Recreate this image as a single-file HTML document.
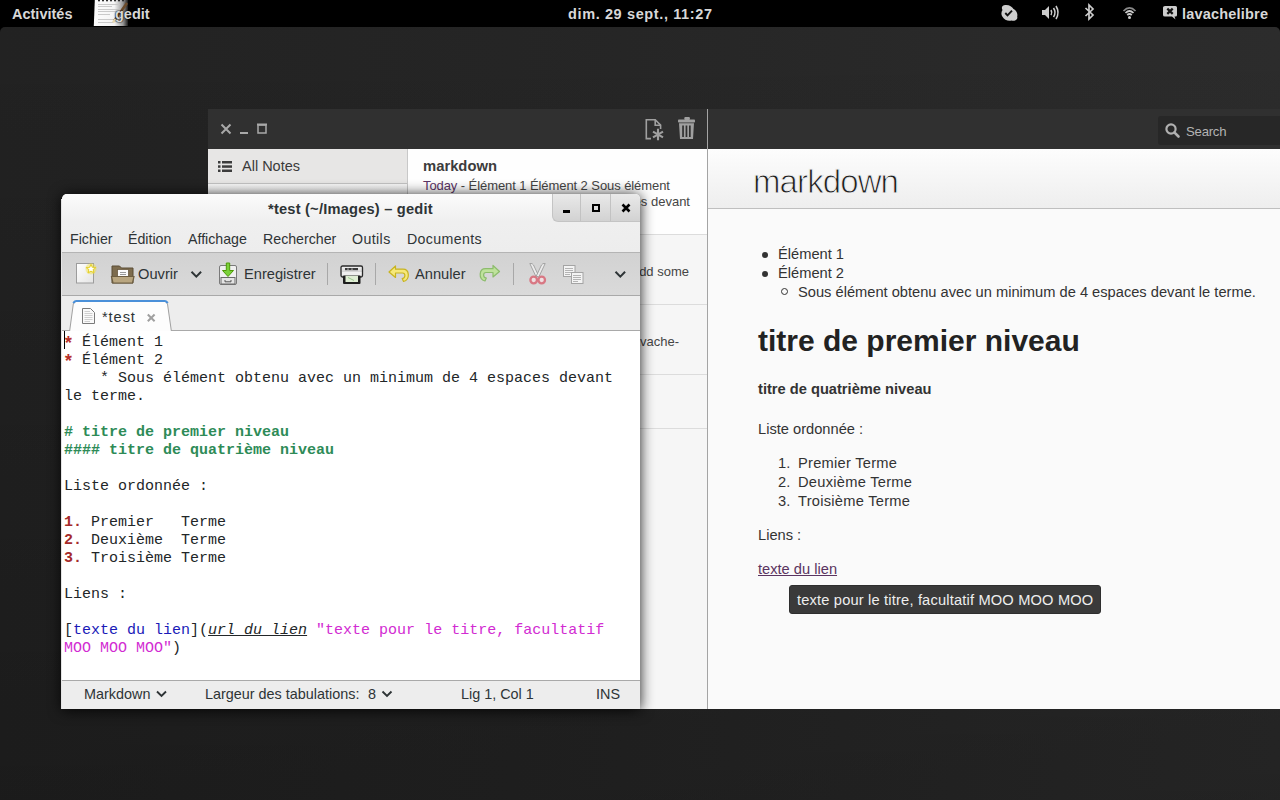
<!DOCTYPE html>
<html><head><meta charset="utf-8">
<style>
*{margin:0;padding:0;box-sizing:border-box}
html,body{width:1280px;height:800px;overflow:hidden}
body{position:relative;font-family:"Liberation Sans",sans-serif;background:#000}
.a{position:absolute}
#desk{left:0;top:27px;width:1280px;height:773px;border-radius:5px 5px 0 0;background:linear-gradient(180deg,rgba(0,0,0,0),rgba(0,0,0,.2)),linear-gradient(90deg,#222222,#252525 40%,#2c2c2c)}
#panel{left:0;top:0;width:1280px;height:27px;background:#000;color:#d8d8d8;font-weight:bold;font-size:14.5px}
#panel .t{position:absolute;top:5px;white-space:nowrap}
/* bijiben */
#bj{left:208px;top:109px;width:1072px;height:600px;background:#fafafa}
#bjhdr{left:0;top:0;width:1072px;height:40px;background:#303030}
#bjsep{left:499px;top:0;width:1px;height:600px;background:#a4a4a4}
#side{left:0;top:40px;width:200px;height:560px;background:#eae9e8;border-right:1px solid #c8c8c8}
#list{left:200px;top:40px;width:299px;height:560px;background:#f6f6f6}
#note{left:500px;top:40px;width:572px;height:560px;background:#fafafa}
/* gedit */
#ge{left:62px;top:194px;width:578px;height:515px;background:#ededed;border-radius:5px 5px 0 0;box-shadow:0 1px 14px rgba(0,0,0,.9)}
.mono{font-family:"Liberation Mono",monospace;font-size:15px;line-height:18px;white-space:pre;color:#222628}
.mn{top:37px;font-size:14.2px;color:#2e3436;line-height:17px;white-space:nowrap}
.tb{top:72px;font-size:14.67px;color:#2e3436;line-height:17px;white-space:nowrap}
.sb{top:492px;font-size:14.4px;color:#2e3436;line-height:17px;white-space:nowrap}
.ui{white-space:nowrap}
.r{color:#a52a2a;font-weight:bold}
.st{display:inline-block;width:9px;transform:translateY(2px) scale(1.2);color:#b8302a}
.g{color:#2e8b57;font-weight:bold}
.bl{color:#1a1ab8}
.u{font-style:italic;text-decoration:underline}
.m{color:#d22bd2}
</style></head><body>
<div id="desk" class="a"></div>
<div id="panel" class="a">
  <div class="t" style="left:12px;top:6px">Activités</div>
  <svg class="a" style="left:90px;top:0" width="42" height="27">
    <defs><linearGradient id="pg" x1="0" x2="1" y1="0" y2="0"><stop offset="0" stop-color="#fdfdfd"/><stop offset="0.6" stop-color="#f4f4f4"/><stop offset="0.85" stop-color="#9a9a9a"/><stop offset="1" stop-color="#1a1a1a"/></linearGradient></defs>
    <path d="M4.8 0 H38 V26 H3.8 Z" fill="url(#pg)"/>
    <g fill="#2a2a2a"><rect x="8" y="0" width="2" height="1.3"/><rect x="12" y="0" width="2" height="1.3"/><rect x="16" y="0" width="2" height="1.3"/><rect x="20" y="0" width="2" height="1.3"/><rect x="24" y="0" width="2" height="1.3"/><rect x="28" y="0" width="2" height="1.3"/><rect x="32" y="0" width="2" height="1.3"/></g>
    <g stroke="#c4c4c4" stroke-width="0.9"><path d="M8 4.5 H30 M8 6.5 H22 M8 9.5 H31 M8 11.5 H26 M8 14.5 H20 M8 19.5 H25 M8 22.5 H23"/></g>
    <path d="M37 3 L24 21" stroke="#6a4a2a" stroke-width="2.6"/>
    <path d="M25.5 19 L23 22.5" stroke="#e8d8b0" stroke-width="2.4"/>
  </svg>
  <div class="t" style="left:115px;top:6px;text-shadow:0 0 2px #000,0 0 1px #000">gedit</div>
  <div class="t" style="left:568px;top:6px;letter-spacing:0.62px">dim. 29 sept., 11:27</div>
  <svg class="a" style="left:990px;top:0" width="200" height="27" fill="#cdcdcd">
    <path d="M15 5 C19 4.5 22 6.5 23.5 9 C26 10 28 13.5 27.2 16.5 C28 19.5 25 21.5 21.5 20.5 C18.5 21.5 14 20 12.3 16.5 C11 14.5 11.2 12 12.5 10 C11 7 12.5 5.2 15 5 Z"/>
    <path d="M15.3 13 L17.5 15.3 L22 10.6" fill="none" stroke="#111" stroke-width="1.9"/>
    <path d="M52 10 H55 L59 6 V19 L55 15 H52 Z"/>
    <path d="M61 10 Q62.5 12.5 61 15" fill="none" stroke="#cdcdcd" stroke-width="1.6"/>
    <path d="M63.5 8 Q66.5 12.5 63.5 17" fill="none" stroke="#cdcdcd" stroke-width="1.6"/>
    <path d="M66 6 Q70 12.5 66 19" fill="none" stroke="#cdcdcd" stroke-width="1.6"/>
    <path d="M95.5 8 L103 15 L99 19 V5 L103 9 L95.5 16" fill="none" stroke="#cdcdcd" stroke-width="1.7"/>
    <path d="M133.5 11 Q139.5 5 145.5 11" fill="none" stroke="#8a8a8a" stroke-width="1.7"/>
    <path d="M135.5 13 Q139.5 9 143.5 13" fill="none" stroke="#cdcdcd" stroke-width="1.7"/>
    <path d="M137.2 15 Q139.5 13 141.8 15" fill="none" stroke="#cdcdcd" stroke-width="1.7"/>
    <circle cx="139.5" cy="17.6" r="1.5"/>
    <path d="M175 6 H185.5 Q187 6 187 7.5 V15 Q187 16.5 185.5 16.5 H184.5 L185.5 19.5 L182 16.5 H175 Q173 16.5 173 15 V7.5 Q173 6 175 6 Z"/>
    <path d="M177.3 8.6 L182.7 13.9 M182.7 8.6 L177.3 13.9" stroke="#111" stroke-width="2.2"/>
  </svg>
  <div class="t" style="left:1182px;top:6px;letter-spacing:0.2px">lavachelibre</div>
</div>

<div id="bj" class="a">
  <div id="bjhdr" class="a">
    <svg class="a" style="left:0;top:0" width="1072" height="40">
      <g stroke="#a8a8a8" stroke-width="2" fill="none">
        <path d="M13.5 15.5 L22.5 24.5 M22.5 15.5 L13.5 24.5"/>
        <path d="M32 24 H40"/>
        <rect x="50" y="16" width="8" height="8" stroke-width="1.5"/>
        <path d="M49 15.5 H59"/>
      </g>
      <g stroke="#a0a0a0" stroke-width="1.6" fill="none">
        <path d="M443 29.6 H438.3 V10.8 H447.2 L452.6 16.2 V20"/>
        <path d="M447.2 10.8 V16.2 H452.6" />
      </g>
      <path d="M450 19.8 V31.2 M445 22.6 L455 28.4 M445 28.4 L455 22.6" stroke="#a0a0a0" stroke-width="2.1" fill="none"/>
      <g fill="#a0a0a0">
        <rect x="476.3" y="8" width="5.6" height="3" rx="1"/>
        <rect x="470" y="10.5" width="17" height="3" rx="0.8"/>
        <path d="M471 14.3 H486 L485 30 H472 Z"/>
      </g>
      <g fill="#303030">
        <rect x="474.2" y="16.5" width="1.7" height="11.5"/>
        <rect x="477.6" y="16.5" width="1.7" height="11.5"/>
        <rect x="481" y="16.5" width="1.7" height="11.5"/>
      </g>
    </svg>
    <div class="a" style="left:950px;top:7px;width:140px;height:29px;background:#272727;border-radius:3px"></div>
    <svg class="a" style="left:956px;top:13px" width="18" height="18"><circle cx="7" cy="7" r="4.6" stroke="#b0b0b0" stroke-width="2.2" fill="none"/><path d="M10.3 10.3 L14.5 14.5" stroke="#b0b0b0" stroke-width="2.6" stroke-linecap="round"/></svg>
    <div class="a" style="left:978px;top:15px;font-size:13.2px;color:#b3b3b3;line-height:16px;letter-spacing:-0.25px">Search</div>
  </div>
  <div id="side" class="a">
    <div class="a" style="left:0;top:0;width:199px;height:35px;background:#e7e6e5;border-bottom:1px solid #c2c2c2"></div>
    <div class="a" style="left:0;top:35px;width:199px;height:30px;background:linear-gradient(#f8f8f8,#e6e6e6)"></div>
    <svg class="a" style="left:10px;top:11px" width="16" height="14"><g fill="#3c3c3c"><rect x="0" y="1" width="2.5" height="2.5"/><rect x="4" y="1" width="10" height="2.5"/><rect x="0" y="5.3" width="2.5" height="2.5"/><rect x="4" y="5.3" width="10" height="2.5"/><rect x="0" y="9.5" width="2.5" height="2.5"/><rect x="4" y="9.5" width="10" height="2.5"/></g></svg>
    <div class="a" style="left:34px;top:9px;font-size:14.5px;color:#3a3a3a;line-height:17px">All Notes</div>
  </div>
  <div id="list" class="a">
    <div class="a" style="left:0;top:0;width:299px;height:86px;background:#fefefe;border-bottom:1px solid #dcdcdc"></div>
    <div class="a" style="left:0;top:155px;width:299px;height:1px;background:#dcdcdc"></div>
    <div class="a" style="left:0;top:225px;width:299px;height:1px;background:#dcdcdc"></div>
    <div class="a" style="left:0;top:279px;width:299px;height:1px;background:#dcdcdc"></div>
    <div class="a" style="left:15px;top:9px;font-size:14.8px;font-weight:bold;color:#3c3c3c;line-height:17px">markdown</div>
    <div class="a" style="left:15px;top:29px;font-size:13px;color:#454545;line-height:16px;white-space:nowrap;letter-spacing:-0.08px"><span style="color:#5c3566">Today</span> - Élément 1 Élément 2 Sous élément</div>
    <div class="a" style="right:17px;top:45px;font-size:13px;color:#454545;line-height:16px;white-space:nowrap;text-align:right">obtenu avec un minimum de 4 espaces devant</div>
    <div class="a" style="right:18px;top:115px;font-size:13px;color:#454545;line-height:16px;white-space:nowrap;text-align:right">Click here to add some</div>
    <div class="a" style="right:28px;top:185px;font-size:13px;color:#454545;line-height:16px;white-space:nowrap;text-align:right">lavachelibre lavache-</div>
  </div>
  <div id="note" class="a">
    <div class="a" style="left:0;top:0;width:572px;height:60px;background:linear-gradient(#fdfdfd,#eeeeee);border-bottom:1px solid #bfbfbf"></div>
    <div class="a" style="left:45px;top:13px;font-size:33px;color:#1e1e1e;-webkit-text-stroke:0.9px #f3f3f3;paint-order:normal;line-height:40px;font-weight:normal;letter-spacing:-0.9px">markdown</div>
    <div id="nc" class="a" style="left:0;top:0;color:#333;font-size:14.67px">
      <div class="a" style="left:54px;top:103px;width:6px;height:6px;border-radius:50%;background:#333"></div>
      <div class="a" style="left:70px;top:97px;line-height:17px;white-space:nowrap">Élément 1</div>
      <div class="a" style="left:54px;top:122px;width:6px;height:6px;border-radius:50%;background:#333"></div>
      <div class="a" style="left:70px;top:116px;line-height:17px;white-space:nowrap">Élément 2</div>
      <div class="a" style="left:73px;top:139px;width:7px;height:7px;border-radius:50%;border:1px solid #333"></div>
      <div class="a" style="left:90px;top:135px;line-height:17px;white-space:nowrap">Sous élément obtenu avec un minimum de 4 espaces devant le terme.</div>
      <div class="a" style="left:50px;top:175px;line-height:34px;white-space:nowrap;font-size:30px;font-weight:bold;color:#222">titre de premier niveau</div>
      <div class="a" style="left:50px;top:232px;line-height:17px;white-space:nowrap;font-weight:bold">titre de quatrième niveau</div>
      <div class="a" style="left:50px;top:272px;line-height:17px;white-space:nowrap">Liste ordonnée :</div>
      <div class="a" style="left:70px;top:306px;line-height:17px;white-space:nowrap">1.</div>
      <div class="a" style="left:90px;top:306px;line-height:17px;white-space:nowrap;letter-spacing:0.26px">Premier Terme</div>
      <div class="a" style="left:70px;top:325px;line-height:17px;white-space:nowrap">2.</div>
      <div class="a" style="left:90px;top:325px;line-height:17px;white-space:nowrap;letter-spacing:0.26px">Deuxième Terme</div>
      <div class="a" style="left:70px;top:344px;line-height:17px;white-space:nowrap">3.</div>
      <div class="a" style="left:90px;top:344px;line-height:17px;white-space:nowrap;letter-spacing:0.26px">Troisième Terme</div>
      <div class="a" style="left:50px;top:378px;line-height:17px;white-space:nowrap">Liens :</div>
      <div class="a" style="left:50px;top:412px;line-height:17px;white-space:nowrap;color:#5a3460;text-decoration:underline">texte du lien</div>
    </div>
  </div>
  <div id="bjsep" class="a"></div>
</div>
<div class="a" style="left:789px;top:585px;width:312px;height:29px;background:#3a3a3a;border-radius:3px;border:1px solid #2e2e2e"></div>
<div class="a" style="left:797px;top:592px;font-size:14.67px;color:#eeeeee;line-height:17px;white-space:nowrap;letter-spacing:0.17px">texte pour le titre, facultatif MOO MOO MOO</div>

<div id="ge" class="a">
  <div class="a" style="left:-1px;top:5px;width:1px;height:510px;background:#e4e4e4"></div>
  <div class="a" style="left:0;top:0;width:578px;height:58px;border-radius:5px 5px 0 0;background:linear-gradient(#fbfbfb 0px,#efefef 28px,#ededed 58px)"></div>
  <div class="a" style="left:0;top:58px;width:578px;height:1px;background:#b4b4b4"></div>
  <div class="a ui" style="left:206px;top:5px;font-size:14.67px;font-weight:bold;color:#2e3436;line-height:20px;letter-spacing:0.2px">*test (~/Images) – gedit</div>
  <!-- wm buttons -->
  <div class="a" style="left:490px;top:0;width:88px;height:28px;border-radius:0 5px 0 6px;background:linear-gradient(#e9e9e9,#d2d2d2);border-left:1px solid #c4c4c4;border-bottom:1px solid #c4c4c4"></div>
  <div class="a" style="left:518px;top:0;width:1px;height:27px;background:#c2c2c2"></div>
  <div class="a" style="left:548px;top:0;width:1px;height:27px;background:#c2c2c2"></div>
  <div class="a" style="left:501px;top:16px;width:7px;height:2.5px;background:#000"></div>
  <div class="a" style="left:530px;top:10px;width:8px;height:8px;border:2.2px solid #000"></div>
  <svg class="a" style="left:559px;top:9px" width="10" height="10"><path d="M1.5 1.5 L8.5 8.5 M8.5 1.5 L1.5 8.5" stroke="#000" stroke-width="2.6"/></svg>
  <!-- menu -->
  <div class="a mn" style="left:8px">Fichier</div>
  <div class="a mn" style="left:66px">Édition</div>
  <div class="a mn" style="left:126px">Affichage</div>
  <div class="a mn" style="left:201px">Rechercher</div>
  <div class="a mn" style="left:290px;letter-spacing:0.4px">Outils</div>
  <div class="a mn" style="left:345px;letter-spacing:0.35px">Documents</div>
  <!-- toolbar -->
  <div class="a" style="left:0;top:59px;width:578px;height:43px;background:linear-gradient(#d2d2d2,#dadada);border-bottom:1px solid #a9a9a9"></div>
  <svg class="a" style="left:0;top:64px" width="578" height="38">
    <!-- new doc -->
    <defs><linearGradient id="nd" x1="0" y1="0" x2="1" y2="1"><stop offset="0" stop-color="#ffffff"/><stop offset="1" stop-color="#e4e4e4"/></linearGradient>
    <radialGradient id="sg"><stop offset="0" stop-color="#ffffff"/><stop offset="0.45" stop-color="#fffbd0"/><stop offset="0.7" stop-color="#f2e34a"/><stop offset="1" stop-color="#f2e34a" stop-opacity="0"/></radialGradient>
    <linearGradient id="pr" x1="0" y1="0" x2="0" y2="1"><stop offset="0" stop-color="#f4f4f4"/><stop offset="1" stop-color="#b8b8b8"/></linearGradient></defs>
    <rect x="14.5" y="5.5" width="17" height="19.5" fill="url(#nd)" stroke="#9c9c9c" stroke-width="1"/>
    <circle cx="29" cy="10.8" r="5.6" fill="#f2e040" opacity="0.45"/>
    <path d="M29 6.4 L30.4 9.3 L33.6 9.6 L31.2 11.7 L31.9 14.8 L29 13.2 L26.1 14.8 L26.8 11.7 L24.4 9.6 L27.6 9.3 Z" fill="#ffffff" stroke="#e6d230" stroke-width="1.1" stroke-linejoin="round"/>
    <!-- open folder -->
    <path d="M50 25 V8 H57.5 L59.5 10 H71 V25 Z" fill="#7d6c4e" stroke="#5a4c34" stroke-width="1"/>
    <rect x="55.5" y="11.5" width="11" height="7.5" fill="#fbfbfb" stroke="#6a5a40" stroke-width="0.8"/>
    <path d="M58 14.5 H64 M58 16.5 H64" stroke="#9a9a9a" stroke-width="1"/>
    <path d="M49.5 18.5 H72 L70.5 25 H51 Z" fill="#b9a680" stroke="#6e5e42" stroke-width="1.2"/>
    <!-- chevron -->
    <path d="M129.5 13.8 L134.3 18.6 L139.1 13.8" fill="none" stroke="#2e3436" stroke-width="2"/>
    <!-- save -->
    <rect x="157.5" y="7.5" width="17" height="19" rx="1.5" fill="#f0f0f0" stroke="#7a7a7a" stroke-width="1"/>
    <rect x="159" y="19.5" width="14" height="6.5" fill="#e4e4e4" stroke="#6a6a6a" stroke-width="1"/>
    <path d="M163 22 V23.8 H169 V22" fill="none" stroke="#555" stroke-width="1"/>
    <path d="M164.3 5 H167.7 V12.5 H171.5 L166 18.5 L160.5 12.5 H164.3 Z" fill="#7ad13a" stroke="#4e9a06" stroke-width="1"/>
    <!-- separator -->
    <rect x="265" y="5" width="1" height="22" fill="#a8a8a8"/>
    <!-- print -->
    <rect x="279" y="8" width="21.5" height="11" rx="1.5" fill="url(#pr)" stroke="#2a2a2a" stroke-width="1.3"/>
    <rect x="283" y="10" width="13" height="2.2" fill="#3a3a3a"/>
    <path d="M285 11.1 H287 M289 11.1 H291" stroke="#cfcfcf" stroke-width="0.8"/>
    <rect x="280" y="14" width="19.5" height="3.5" fill="#efefef"/>
    <rect x="281" y="17.5" width="17.5" height="8.5" rx="1" fill="#1e1e1e"/>
    <rect x="283.5" y="17.8" width="12.5" height="6.2" fill="#dfeed4"/>
    <path d="M286 19.5 L292 22.5" stroke="#9cc890" stroke-width="1"/>
    <rect x="313" y="5" width="1" height="22" fill="#a8a8a8"/>
    <!-- undo -->
    <path d="M327 14 L333.5 8 V11.2 H341 C347.5 11.2 348.5 21.5 341.5 23.5 L340.2 20.6 C344 19.5 343.5 15 340.5 15 H333.5 V19.5 Z" fill="#f6e87a" stroke="#c8b420" stroke-width="1.2" stroke-linejoin="round"/>
    <!-- redo -->
    <path d="M437.5 13.5 L431 7.5 V10.7 H423.5 C417 10.7 416 21 423 23 L424.3 20.1 C420.5 19 421 14.5 424 14.5 H431 V19 Z" fill="#bfe29c" stroke="#8cbc6c" stroke-width="1.2" stroke-linejoin="round"/>
    <rect x="451" y="5" width="1" height="22" fill="#a8a8a8"/>
    <!-- cut -->
    <path d="M467.8 5.5 Q470.5 5 471.5 7 L476.8 18.2 L474.2 19 Z" fill="#ececec" stroke="#9c9c9c" stroke-width="0.9" stroke-linejoin="round"/>
    <path d="M483.2 5.5 Q480.5 5 479.5 7 L474.2 18.2 L476.8 19 Z" fill="#ececec" stroke="#9c9c9c" stroke-width="0.9" stroke-linejoin="round"/>
    <circle cx="471.7" cy="22" r="3.3" fill="#efe0e2" stroke="#d87884" stroke-width="2.3"/>
    <circle cx="479.7" cy="22" r="3.3" fill="#efe0e2" stroke="#d87884" stroke-width="2.3"/>
    <!-- copy -->
    <rect x="501.5" y="7.5" width="11.5" height="11" fill="#f4f4f4" stroke="#a4a4a4" stroke-width="1"/>
    <path d="M503 10.5 H511 M503 12.5 H511 M503 14.5 H511 M503 16.5 H508" stroke="#b4b4b4" stroke-width="1"/>
    <rect x="509.5" y="14.5" width="11.5" height="11" fill="#f4f4f4" stroke="#a4a4a4" stroke-width="1"/>
    <path d="M511 17.5 H519 M511 19.5 H519 M511 21.5 H519 M511 23.5 H516" stroke="#b4b4b4" stroke-width="1"/>
    <!-- overflow chevron -->
    <path d="M553.5 13.8 L558.3 18.6 L563.1 13.8" fill="none" stroke="#2e3436" stroke-width="2"/>
  </svg>
  <div class="a tb" style="left:76px">Ouvrir</div>
  <div class="a tb" style="left:182px">Enregistrer</div>
  <div class="a tb" style="left:353px">Annuler</div>
  <!-- tabs -->
  <div class="a" style="left:0;top:102px;width:578px;height:35px;background:#ededed;border-bottom:1px solid #a9a9a9"></div>
  <svg class="a" style="left:0;top:102px" width="578" height="36">
    <path d="M7.5 36 L11.3 8 Q11.8 5.5 14.5 5.5 H102.5 Q105 5.5 105.5 8 L109.5 36 Z" fill="#fdfdfd" stroke="#a0a0a0" stroke-width="1"/>
    <path d="M11.5 7.2 Q12.3 5 14.5 5 H102.5 Q104.7 5 105.5 7.2" fill="none" stroke="#4a90d9" stroke-width="2.2"/>
    <path d="M20.5 12.5 H28.5 L32.5 16.5 V27.5 H20.5 Z" fill="#fafafa" stroke="#7a7a7a" stroke-width="1"/>
    <path d="M22.5 15.5 H28 M22.5 17.5 H30.5 M22.5 19.5 H30.5 M22.5 21.5 H30.5 M22.5 23.5 H30.5 M22.5 25.5 H28" stroke="#c4c4c4" stroke-width="0.8"/>
    <path d="M85.8 18.5 L92.6 25.3 M92.6 18.5 L85.8 25.3" stroke="#a0a0a0" stroke-width="2"/>
  </svg>
  <div class="a ui" style="left:40px;top:115px;font-size:14.67px;color:#2e3436;line-height:17px;letter-spacing:0.9px">*test</div>
  <!-- text view -->
  <div class="a" style="left:0;top:137px;width:578px;height:349px;background:#fff"></div>
  <div class="a" style="left:2px;top:137px;width:1px;height:18px;background:#000"></div>
  <div class="a mono" style="left:2px;top:140px"><span class="r st">*</span> Élément 1
<span class="r st">*</span> Élément 2
    * Sous élément obtenu avec un minimum de 4 espaces devant
le terme.

<span class="g"># titre de premier niveau</span>
<span class="g">#### titre de quatrième niveau</span>

Liste ordonnée :

<span class="r">1.</span> Premier   Terme
<span class="r">2.</span> Deuxième  Terme
<span class="r">3.</span> Troisième Terme

Liens :

[<span class="bl">texte du lien</span>](<span class="u">url_du_lien</span> <span class="m">"texte pour le titre, facultatif</span>
<span class="m">MOO MOO MOO"</span>)</div>
  <!-- status bar -->
  <div class="a" style="left:0;top:486px;width:578px;height:29px;background:#ededed;border-top:1px solid #a9a9a9"></div>
  <div class="a sb" style="left:22px">Markdown</div>
  <div class="a sb" style="left:143px">Largeur des tabulations:</div>
  <div class="a sb" style="left:306px">8</div>
  <div class="a sb" style="left:399px">Lig 1, Col 1</div>
  <div class="a sb" style="left:534px">INS</div>
  <svg class="a" style="left:0;top:486px" width="578" height="29">
    <path d="M95 11.5 L99.5 16 L104 11.5" fill="none" stroke="#2e3436" stroke-width="1.9"/>
    <path d="M320.5 11.5 L325 16 L329.5 11.5" fill="none" stroke="#2e3436" stroke-width="1.9"/>
  </svg>
</div>
</body></html>
